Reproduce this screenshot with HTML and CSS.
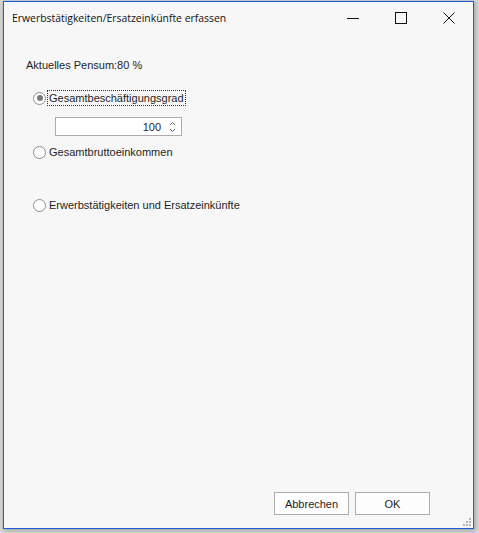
FILE: index.html
```html
<!DOCTYPE html>
<html lang="de">
<head>
<meta charset="utf-8">
<link rel="stylesheet" href="styles.css">
</head>
<body>
<div class="window">
  <div class="titlebar">
    <span class="title">Erwerbstätigkeiten/Ersatzeinkünfte erfassen</span>
    <div class="controls">
      <span class="ctl"><svg width="12" height="12" viewBox="0 0 12 12"><path d="M0 6.5H12" stroke="#111" stroke-width="1"/></svg></span>
      <span class="ctl"><svg width="12" height="12" viewBox="0 0 12 12"><rect x="0.5" y="0.5" width="11" height="11" fill="none" stroke="#111" stroke-width="1"/></svg></span>
      <span class="ctl"><svg width="12" height="12" viewBox="0 0 12 12"><path d="M0.5 0.5L11.5 11.5M11.5 0.5L0.5 11.5" stroke="#111" stroke-width="1"/></svg></span>
    </div>
  </div>
  <div class="content">
    <div class="pensum">Aktuelles Pensum:80 %</div>
    <div class="radio r1"><span class="circle checked"></span><span class="label focus">Gesamtbeschäftigungsgrad</span></div>
    <div class="spin">
      <span class="value">100</span>
      <span class="arrows">
        <svg width="7" height="14" viewBox="0 0 7 14"><path d="M1 5L3.5 2.5L6 5" fill="none" stroke="#666" stroke-width="1"/><path d="M1 9L3.5 11.5L6 9" fill="none" stroke="#666" stroke-width="1"/></svg>
      </span>
    </div>
    <div class="radio r2"><span class="circle"></span><span class="label">Gesamtbruttoeinkommen</span></div>
    <div class="radio r3"><span class="circle"></span><span class="label">Erwerbstätigkeiten und Ersatzeinkünfte</span></div>
    <div class="footer">
      <button class="btn">Abbrechen</button>
      <button class="btn">OK</button>
    </div>
  </div>
  <div class="grip">
    <svg width="8" height="8" viewBox="0 0 8 8" fill="#b4b4b4"><rect x="6" y="0" width="2" height="2"/><rect x="3" y="3" width="2" height="2"/><rect x="6" y="3" width="2" height="2"/><rect x="0" y="6" width="2" height="2"/><rect x="3" y="6" width="2" height="2"/><rect x="6" y="6" width="2" height="2"/></svg>
  </div>
</div>
</body>
</html>
```
FILE: styles.css
```css
html, body {
  margin: 0;
  padding: 0;
}
body {
  width: 479px;
  height: 533px;
  background: #dcdcdc;
  overflow: hidden;
  font-family: "Liberation Sans", Arial, sans-serif;
}
.window {
  position: relative;
  box-sizing: border-box;
  margin: 1px 0 0 3px;
  width: 471px;
  height: 528px;
  border: 1px solid #1a5fd8;
  background: #f7f7f7;
  box-shadow: 1px 1px 5px 1px rgba(0,0,0,0.25);
  display: flex;
  flex-direction: column;
}
.titlebar {
  height: 34px;
  display: flex;
  align-items: center;
  justify-content: space-between;
  padding-left: 8px;
}
.title {
  font-family: "Open Sans", sans-serif;
  font-size: 10.4px;
  color: #111;
  margin-top: -2px;
}
.controls {
  display: flex;
  height: 100%;
  align-items: center;
  margin-top: -2px;
}
.ctl {
  width: 48px;
  height: 30px;
  display: flex;
  align-items: center;
  justify-content: center;
}
.ctl svg { display: block; }
.content {
  flex: 1;
  display: flex;
  flex-direction: column;
  padding: 0 0 13px 22px;
  font-size: 11px;
  color: #1e1e1e;
}
.pensum {
  margin-top: 22px;
  line-height: 14px;
}
.radio {
  display: flex;
  align-items: center;
  height: 16px;
  margin-left: 7px;
}
.r1 { margin-top: 18px; }
.r2 { margin-top: 8px; }
.r3 { margin-top: 37px; }
.circle {
  box-sizing: border-box;
  width: 13px;
  height: 13px;
  border-radius: 50%;
  border: 1px solid #8c8c8c;
  background: #fff;
  display: flex;
  align-items: center;
  justify-content: center;
  margin-right: 1px;
}
.circle.checked::after {
  content: "";
  width: 6px;
  height: 6px;
  border-radius: 50%;
  background: #7a7a7a;
}
.label {
  line-height: 14px;
  padding: 0 1px;
  border: 1px dotted transparent;
}
.label.focus {
  border-color: #333;
}
.spin {
  box-sizing: border-box;
  margin: 11px 0 0 29px;
  width: 127px;
  height: 19px;
  border: 1px solid #acacac;
  background: #fff;
  display: flex;
  align-items: center;
  justify-content: flex-end;
}
.value {
  margin-right: 4px;
}
.arrows {
  width: 15px;
  display: flex;
  justify-content: center;
  margin-right: 1px;
}
.arrows svg { display: block; }
.footer {
  margin-top: auto;
  display: flex;
  justify-content: flex-end;
  gap: 6px;
  padding-right: 43px;
}
.btn {
  box-sizing: border-box;
  width: 75px;
  height: 23px;
  border: 1px solid #adadad;
  background: #fdfdfd;
  font-family: "Liberation Sans", Arial, sans-serif;
  font-size: 11px;
  color: #1e1e1e;
  padding: 0;
}
.grip {
  position: absolute;
  right: 2px;
  bottom: 2px;
  line-height: 0;
}
```
